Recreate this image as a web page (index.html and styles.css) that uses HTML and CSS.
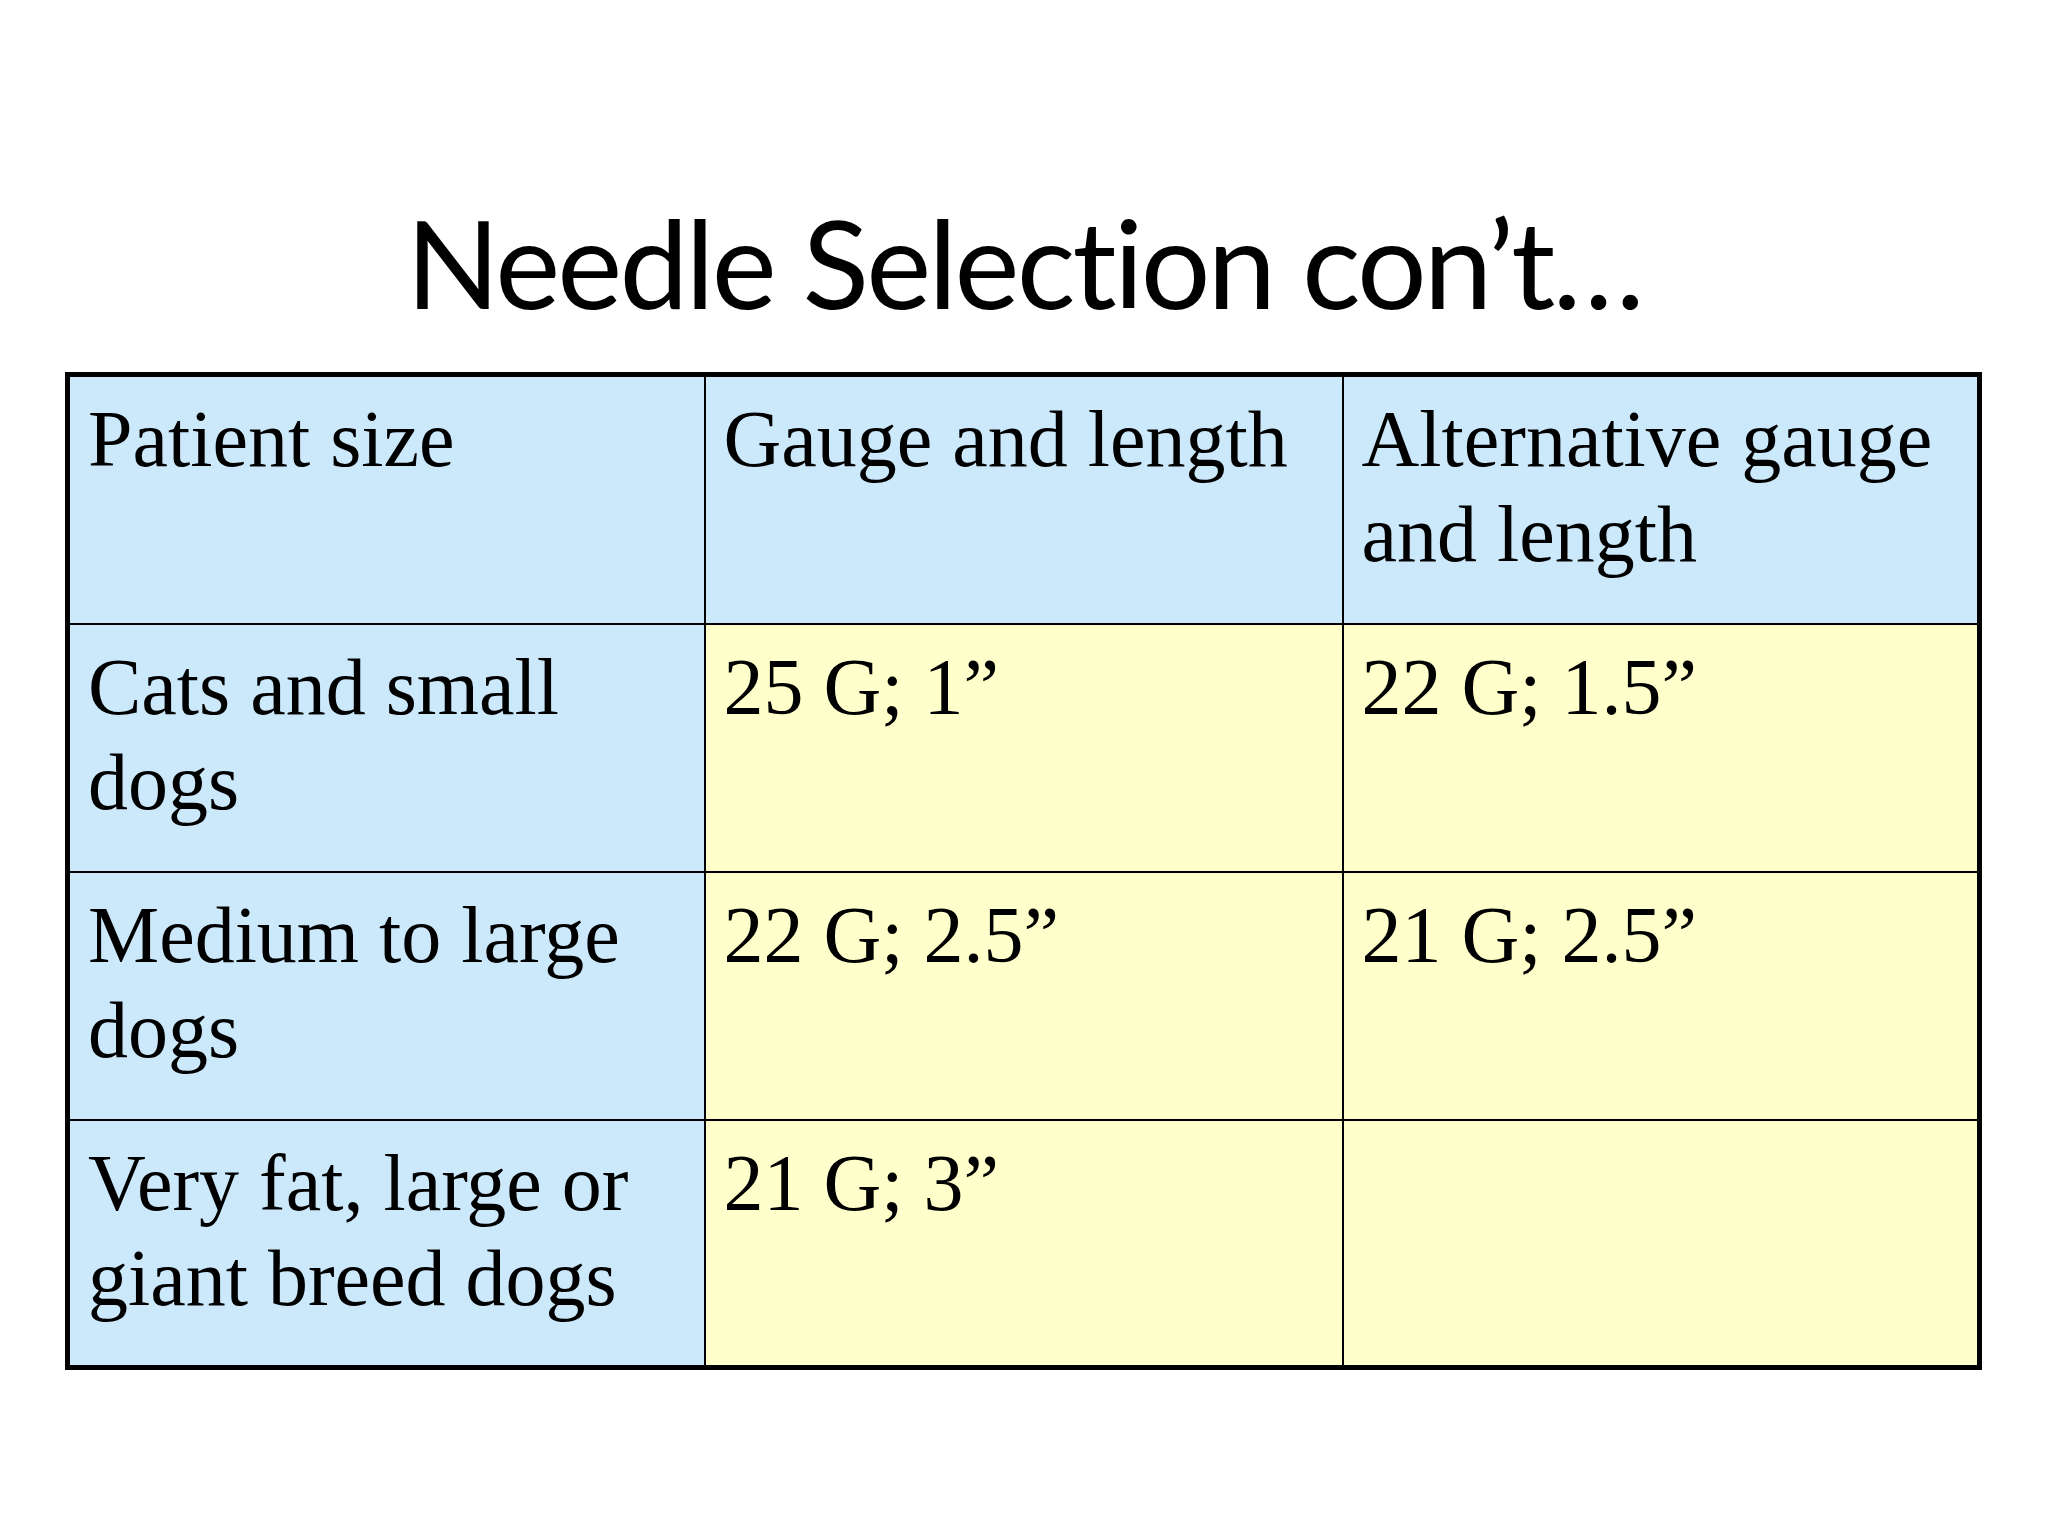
FILE: index.html
```html
<!DOCTYPE html>
<html lang="en">
<head>
<meta charset="utf-8">
<title>Needle Selection con't…</title>
<link rel="stylesheet" href="styles.css">
</head>
<body>
<main class="slide">
  <h1 class="slide-title">Needle Selection con’t…</h1>
  <table class="needle-table">
    <colgroup>
      <col class="col-a">
      <col class="col-b">
      <col class="col-c">
    </colgroup>
    <tr class="row head">
      <td class="cell blue">Patient size</td>
      <td class="cell blue">Gauge and length</td>
      <td class="cell blue">Alternative gauge and length</td>
    </tr>
    <tr class="row">
      <td class="cell blue">Cats and small dogs</td>
      <td class="cell yellow">25 G; 1”</td>
      <td class="cell yellow">22 G; 1.5”</td>
    </tr>
    <tr class="row">
      <td class="cell blue">Medium to large dogs</td>
      <td class="cell yellow">22 G; 2.5”</td>
      <td class="cell yellow">21 G; 2.5”</td>
    </tr>
    <tr class="row">
      <td class="cell blue">Very fat, large or giant breed dogs</td>
      <td class="cell yellow">21 G; 3”</td>
      <td class="cell yellow"></td>
    </tr>
  </table>
</main>
</body>
</html>
```
FILE: styles.css
```css
html, body {
  margin: 0;
  padding: 0;
  background: #ffffff;
}

.slide {
  width: 2048px;
  height: 1536px;
  padding-top: 187px;
  box-sizing: border-box;
}

.slide-title {
  margin: 0 0 35px 0;
  font-family: "Lato", "Liberation Sans", sans-serif;
  font-weight: 400;
  font-size: 123px;
  letter-spacing: -2.8px;
  font-variant-ligatures: none;
  font-feature-settings: "liga" 0, "clig" 0;
  line-height: 150px;
  height: 150px;
  text-align: center;
  color: #000000;
}

.needle-table {
  margin-left: 65px;
  width: 1912px;
  border-collapse: collapse;
  table-layout: fixed;
  border: 5px solid #000000;
}

.col-a { width: 637px; }
.col-b { width: 638px; }
.col-c { width: 637px; }

.row { height: 248px; }
.row.head { height: 249px; }

.cell {
  border: 2px solid #000000;
  vertical-align: top;
  padding: 15px 20px 0 18px;
  font-family: "Liberation Serif", "Times New Roman", serif;
  font-size: 80px;
  line-height: 95px;
  color: #000000;
}

.blue { background: #cce9fb; }
.yellow { background: #ffffcc; }
```
